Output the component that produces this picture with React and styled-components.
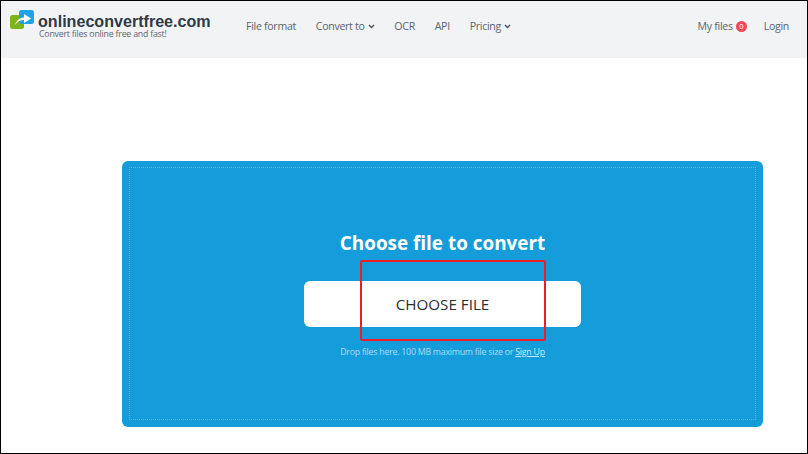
import React from 'react'
import styled, { createGlobalStyle } from 'styled-components'

const Global = createGlobalStyle`
  html, body { margin: 0; padding: 0; background: #fff; }
  * { box-sizing: border-box; }
`

const Page = styled.div`
  width: 808px;
  height: 454px;
  overflow: hidden;
  border: 1px solid #000;
  background: #fff;
  font-family: "Open Sans", "Liberation Sans", sans-serif;
`

const Header = styled.header`
  height: 57px;
  background: #f1f3f5;
  display: flex;
  align-items: flex-start;
  padding: 9px 18px 0 9px;
`

const Brand = styled.a`
  display: flex;
  width: 236px;
  flex: none;
`

const BrandText = styled.div`
  margin-left: 4px;
  padding-top: 2px;
  display: flex;
  flex-direction: column;
`

const BrandName = styled.span`
  font-family: "Liberation Sans", Arial, sans-serif;
  font-weight: 700;
  font-size: 16.1px;
  line-height: 18px;
  color: #2f3a45;
`

const BrandTag = styled.span`
  padding-left: 1px;
  font-size: 8.8px;
  line-height: 8px;
  letter-spacing: -0.22px;
  color: #5c6670;
`

const Nav = styled.nav`
  display: flex;
  gap: 19.8px;
  padding-top: 8px;
  flex: 1;
`

const NavLink = styled.a`
  display: flex;
  align-items: center;
  gap: 3px;
  font-size: 10.6px;
  line-height: 16px;
  letter-spacing: -0.3px;
  color: #5a6570;
`

const UserNav = styled.div`
  display: flex;
  gap: 17px;
  padding-top: 8px;
`

const Badge = styled.span`
  width: 11px;
  height: 11px;
  border-radius: 50%;
  background: #f9455a;
  color: #fff;
  font-size: 7.5px;
  line-height: 11px;
  text-align: center;
`

const Main = styled.main`
  padding: 103px 44px 0 121px;
`

const Drop = styled.section`
  height: 266px;
  padding: 6px 7px 7px;
  background: #159cdb;
  border-radius: 6px;
`

const DropInner = styled.div`
  height: 100%;
  border: 1px dotted #4fb5e4;
  display: flex;
  flex-direction: column;
  align-items: center;
  padding-top: 62px;
`

const Title = styled.h2`
  margin: 0;
  font-size: 18.9px;
  line-height: 26px;
  font-weight: 700;
  color: #fff;
`

const ChooseWrap = styled.div`
  position: relative;
  margin-top: 25px;
`

const ChooseButton = styled.button`
  display: block;
  width: 277px;
  height: 46px;
  border: 0;
  border-radius: 6px;
  background: #fff;
  color: #2b2f33;
  font-family: inherit;
  font-size: 15.2px;
  text-transform: uppercase;
`

const Highlight = styled.div`
  position: absolute;
  left: 56px;
  top: -21px;
  width: 186px;
  height: 81px;
  border: 2px solid #ee1c25;
  border-radius: 2px;
`

const Hint = styled.p`
  margin: 19px 0 0;
  font-size: 8.8px;
  line-height: 13px;
  letter-spacing: -0.24px;
  color: #a9dcf5;
`

const HintLink = styled.a`
  color: #cdecfa;
  text-decoration: underline;
`

const Chevron = () => (
  <svg width="7" height="5" viewBox="0 0 7 5" fill="none">
    <path d="M1 1l2.5 2.5L6 1" stroke="#46505a" strokeWidth="1.4" />
  </svg>
)

const Logo = () => (
  <svg width="24" height="19" viewBox="0 0 24 19">
    <rect x="0" y="5" width="14" height="14" rx="2.5" fill="#7cb518" />
    <rect x="9" y="0" width="15" height="14" rx="2.5" fill="#1ea4e4" />
    <path d="M5 15c1-4 4-7 9-7.500V4l7 4.500-7 4.500v-3c-4 0-6.500 1.500-9 5z" fill="#fff" />
  </svg>
)

function App () {
  return (
    <Page>
      <Global />
      <Header>
        <Brand>
          <Logo />
          <BrandText>
            <BrandName>onlineconvertfree.com</BrandName>
            <BrandTag>Convert files online free and fast!</BrandTag>
          </BrandText>
        </Brand>
        <Nav>
          <NavLink>File format</NavLink>
          <NavLink>Convert to <Chevron /></NavLink>
          <NavLink>OCR</NavLink>
          <NavLink>API</NavLink>
          <NavLink>Pricing <Chevron /></NavLink>
        </Nav>
        <UserNav>
          <NavLink>My files <Badge>0</Badge></NavLink>
          <NavLink>Login</NavLink>
        </UserNav>
      </Header>
      <Main>
        <Drop>
          <DropInner>
            <Title>Choose file to convert</Title>
            <ChooseWrap>
              <ChooseButton>Choose file</ChooseButton>
              <Highlight />
            </ChooseWrap>
            <Hint>Drop files here. 100 MB maximum file size or <HintLink>Sign Up</HintLink></Hint>
          </DropInner>
        </Drop>
      </Main>
    </Page>
  )
}

export default App
